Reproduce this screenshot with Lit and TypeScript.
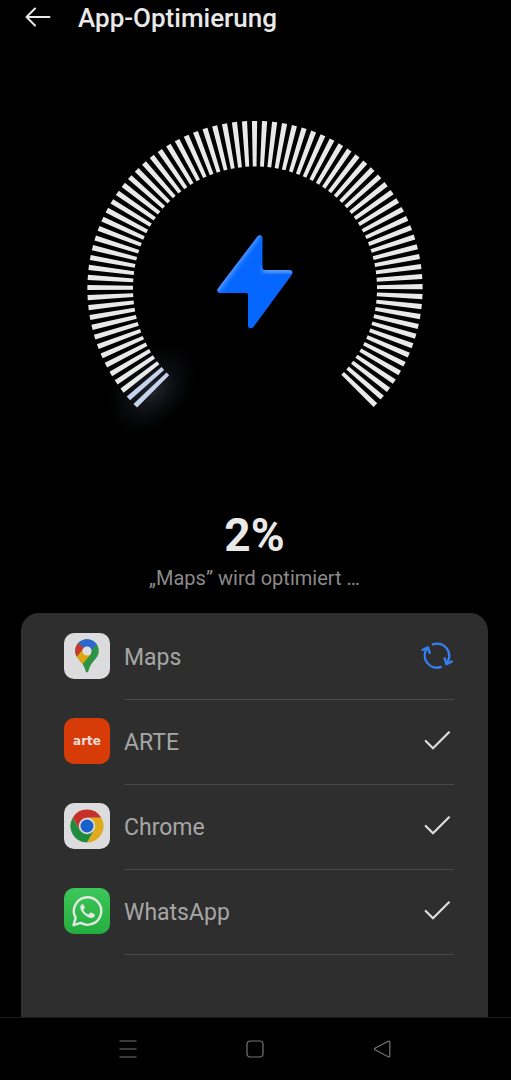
import { LitElement, html, svg, css, TemplateResult } from "lit";
import { customElement, property } from "lit/decorators.js";

type AppState = "busy" | "done";
interface AppEntry {
  name: string;
  icon: string;
  state: AppState;
}

const APPS: AppEntry[] = [
  { name: "Maps", icon: "maps", state: "busy" },
  { name: "ARTE", icon: "arte", state: "done" },
  { name: "Chrome", icon: "chrome", state: "done" },
  { name: "WhatsApp", icon: "whatsapp", state: "done" },
];

const ICONS: Record<string, TemplateResult> = {
  maps: html`<svg viewBox="0 0 46 46" aria-hidden="true">
    <defs>
      <clipPath id="pin">
        <path d="M23 6.200C16.300 6.200 11.200 11.300 11.200 18C11.200 25.500 19 28.500 21 36C21.600 38.400 22 39.500 23 39.500C24 39.500 24.400 38.400 25 36C27 28.500 34.800 25.500 34.800 18C34.800 11.300 29.700 6.200 23 6.200Z" />
      </clipPath>
    </defs>
    <rect width="46" height="46" rx="10" fill="#dcdcde" />
    <g clip-path="url(#pin)">
      <rect x="8" y="4" width="30" height="38" fill="#2d9346" />
      <path d="M8 4H38L33.500 10.500L25 20L8 5Z" fill="#2c68d0" />
      <path d="M14.300 10.300L20 15L12.200 24.500L4 24V4H8Z" fill="#c9382d" />
      <path d="M12.200 24.500L20 15L27 21L16.500 33.500L6 30Z" fill="#dfa60d" />
    </g>
    <circle cx="23" cy="18" r="4.600" fill="#dedee2" />
  </svg>`,
  arte: html`<svg viewBox="0 0 46 46" aria-hidden="true">
    <rect width="46" height="46" rx="10" fill="#d73b07" />
    <text class="arte" x="23" y="27" text-anchor="middle">arte</text>
  </svg>`,
  chrome: html`<svg viewBox="0 0 46 46" aria-hidden="true">
    <rect width="46" height="46" rx="10" fill="#dcdcde" />
    <path d="M8.700 14.750A16.500 16.500 0 0 1 37.300 14.750H23L15.900 27.100Z" fill="#c6322a" />
    <path d="M37.300 14.750A16.500 16.500 0 0 1 23 39.500L30.100 27.100L23 14.750Z" fill="#dfaa1c" />
    <path d="M23 39.500A16.500 16.500 0 0 1 8.700 14.750L15.900 27.100L30.100 27.100Z" fill="#228a3c" />
    <circle cx="23" cy="23" r="8.200" fill="#dcdcde" />
    <circle cx="23" cy="23" r="6.500" fill="#1a60cc" />
  </svg>`,
  whatsapp: html`<svg viewBox="0 0 46 46" aria-hidden="true">
    <defs>
      <linearGradient id="wa" x2="0" y2="1">
        <stop stop-color="#3dc659" /><stop offset="1" stop-color="#25ad40" />
      </linearGradient>
    </defs>
    <rect width="46" height="46" rx="10" fill="url(#wa)" />
    <path d="M9.500 37.200L11.700 29.900A13.700 13.700 0 1 1 16.700 34.900Z" fill="none" stroke="#e2e8e1" stroke-width="2.400" stroke-linejoin="round" />
    <path d="M18.300 16.200C17.400 16.200 16.300 17.400 16.300 19.300C16.300 21.600 18 23.900 19.600 25.700C22 28.300 24.900 29.900 27.500 29.900C29.500 29.900 30.700 28.600 30.900 27.200C31 26.500 30.800 26.200 30.200 25.900L27.200 24.500C26.700 24.300 26.400 24.400 26 24.900L24.900 26.200C24.600 26.500 24.300 26.500 23.900 26.300C22 25.500 20.500 24 19.600 22.400C19.400 22 19.500 21.700 19.700 21.400L20.600 20.200C20.800 19.900 20.800 19.600 20.700 19.300L19.500 16.700C19.300 16.300 19 16.200 18.300 16.200Z" fill="#e2e8e1" />
  </svg>`,
};

@customElement("optimizer-gauge")
export class OptimizerGauge extends LitElement {
  static styles = css`
    :host {
      display: block;
    }
    .dial {
      display: block;
      width: 400px;
      max-width: 100%;
      margin: 0 auto;
    }
  `;

  @property({ type: Number }) value = 0;

  private readonly ticks = 79;

  private tick(i: number) {
    const angle = -134.4 + i * 3.442;
    const lit = i / this.ticks < this.value / 100;
    return svg`<path
      d="M-2.600 -167.600H2.600L1.900 -122H-1.900Z"
      transform="rotate(${angle})"
      fill=${lit ? "#c6d3ec" : "#e9e9e9"} />`;
  }

  render() {
    return html`<svg class="dial" viewBox="-200 -188.500 400 340" role="img" aria-label="Fortschritt ${this.value} %">
      <defs>
        <radialGradient id="glow">
          <stop stop-color="#8a96b8" stop-opacity="0.260" />
          <stop offset="0.500" stop-color="#707a98" stop-opacity="0.110" />
          <stop offset="1" stop-color="#404a60" stop-opacity="0" />
        </radialGradient>
        <filter id="soft" x="-20%" y="-20%" width="140%" height="140%">
          <feGaussianBlur stdDeviation="2.500" />
        </filter>
        <clipPath id="bolt">
          <path d="M2.500 -52C4 -54.200 7.500 -53.500 7.500 -50V-21Q7.500 -18.500 10 -18.500H34.500C37.300 -18.500 38.300 -16 36.600 -13.600L-1.600 38.500C-3.200 40.700 -7 40.300 -7 37V6Q-7 4.500 -8.500 4.500H-34.500C-37.500 4.500 -38.600 2 -36.900 -0.300Z" />
        </clipPath>
      </defs>
      <ellipse cx="-103" cy="101" rx="54" ry="36" transform="rotate(-45 -103 101)" fill="url(#glow)" />
      ${Array.from({ length: this.ticks }, (_, i) => this.tick(i))}
      <g clip-path="url(#bolt)">
        <rect x="-45" y="-60" width="90" height="110" fill="#0567ff" />
        <path d="M-40 3L6 -59" stroke="#6aa9ff" stroke-width="5" filter="url(#soft)" />
        <rect x="8" y="-22" width="32" height="6" fill="#6aa9ff" filter="url(#soft)" />
      </g>
    </svg>`;
  }
}

@customElement("app-row")
export class AppRow extends LitElement {
  static styles = css`
    :host {
      display: flex;
      align-items: flex-start;
      gap: 14px;
    }
    .icon {
      flex: none;
      width: 46px;
      height: 46px;
      padding-top: 18px;
    }
    .icon svg {
      display: block;
    }
    .arte {
      font: 700 12px "DejaVu Sans", sans-serif;
      fill: #eadfda;
    }
    .body {
      flex: 1;
      display: flex;
      align-items: center;
      justify-content: space-between;
      height: 85px;
      padding-top: 2px;
      box-sizing: border-box;
      border-bottom: 1px solid #484848;
    }
    .name {
      font-size: 23px;
      line-height: 28px;
      color: #a6a6a6;
    }
    .state {
      display: block;
      width: 34px;
      height: 34px;
    }
  `;

  @property({ attribute: false }) entry!: AppEntry;

  private renderState() {
    return this.entry.state === "busy"
      ? html`<svg class="state" viewBox="0 2 34 34" role="img" aria-label="Wird optimiert" fill="none" stroke="#3480f0" stroke-width="2.400" stroke-linecap="round" stroke-linejoin="round">
          <path d="M13 5.300A12.200 12.200 0 0 1 26.700 24.300" />
          <path d="M24.700 19.500L26.400 25.200L31.700 22.600" />
          <path d="M20.700 28A12.200 12.200 0 0 1 7 9.300" />
          <path d="M2.400 11L8 8.400L9.700 14" />
        </svg>`
      : html`<svg class="state" viewBox="0 2 34 34" role="img" aria-label="Fertig" fill="none" stroke="#dedede" stroke-width="2.200" stroke-linecap="round" stroke-linejoin="miter">
          <path d="M5.700 17L13 24.300L29 8.300" />
        </svg>`;
  }

  render() {
    return html`
      <span class="icon">${ICONS[this.entry.icon]}</span>
      <div class="body">
        <span class="name">${this.entry.name}</span>
        ${this.renderState()}
      </div>
    `;
  }
}

@customElement("app-root")
export class AppRoot extends LitElement {
  static styles = css`
    :host {
      display: flex;
      flex-direction: column;
      min-height: 100vh;
      background: #000;
      color: #e9e9e9;
      font-family: Roboto, sans-serif;
    }
    button {
      display: grid;
      place-items: center;
      padding: 0;
      border: 0;
      background: none;
      cursor: pointer;
    }
    .header {
      display: flex;
      align-items: center;
      gap: 24px;
      height: 36px;
      padding: 0 22px;
    }
    .title {
      margin: 0;
      font-size: 26px;
      line-height: 36px;
      font-weight: 500;
    }
    .main {
      flex: 1;
      display: flex;
      flex-direction: column;
      padding: 64px 23px 0 21px;
    }
    .status {
      padding: 68px 0 23px;
      text-align: center;
    }
    .percent {
      margin: 0;
      font-size: 46px;
      line-height: 54px;
      font-weight: 700;
    }
    .message {
      margin: 4px 0 0;
      font-size: 20px;
      line-height: 24px;
      color: #8b8b8b;
    }
    .card {
      flex: 1;
      padding: 2px 34px 62px 43px;
      border-radius: 18px 18px 0 0;
      background: #2e2e2e;
    }
    .list {
      margin: 0;
      padding: 0;
      list-style: none;
    }
    .nav {
      display: grid;
      grid-template-columns: repeat(3, 1fr);
      height: 62px;
      padding: 0 66px 0 65px;
      border-top: 1px solid #1c1c1c;
    }
    .glyph {
      display: block;
      fill: none;
      stroke: #747474;
      stroke-width: 1.2px;
      stroke-linejoin: round;
    }
  `;

  @property({ type: Number }) percent = 2;

  render() {
    const active = APPS.find((app) => app.state === "busy");
    return html`
      <header class="header">
        <button aria-label="Zurück">
          <svg width="32" height="32" viewBox="0 0 32 32" fill="none" stroke="#e9e9e9" stroke-width="2" stroke-linecap="round" stroke-linejoin="round">
            <path d="M13 6.500L4.500 15L13 23.500M4.500 15H27.500" />
          </svg>
        </button>
        <h1 class="title">App-Optimierung</h1>
      </header>
      <main class="main">
        <optimizer-gauge .value=${this.percent}></optimizer-gauge>
        <section class="status" aria-live="polite">
          <p class="percent">${this.percent}%</p>
          <p class="message">„${active?.name}” wird optimiert …</p>
        </section>
        <section class="card">
          <ul class="list">
            ${APPS.map((app) => html`<li><app-row .entry=${app}></app-row></li>`)}
          </ul>
        </section>
      </main>
      <nav class="nav">
        <button aria-label="Letzte Apps">
          <svg class="glyph" width="20" height="20" viewBox="0 0 20 20"><path d="M1.500 2H18.500M1.500 10H18.500M1.500 18H18.500" /></svg>
        </button>
        <button aria-label="Startbildschirm">
          <svg class="glyph" width="20" height="20" viewBox="0 0 20 20"><rect x="2" y="2" width="16" height="16" rx="3.500" /></svg>
        </button>
        <button aria-label="Zurück">
          <svg class="glyph" width="20" height="20" viewBox="0 0 20 20"><path d="M16.200 2.300L3 9.200Q1.800 10 3 10.800L16.200 17.700Q17.800 18.300 17.800 16.700V3.300Q17.800 1.700 16.200 2.300Z" /></svg>
        </button>
      </nav>
    `;
  }
}
